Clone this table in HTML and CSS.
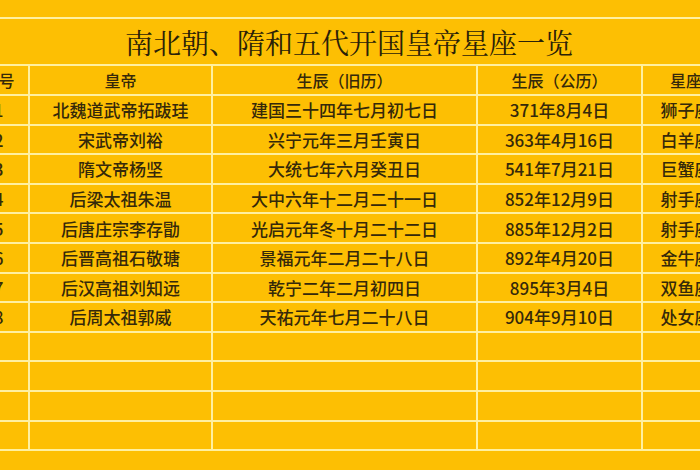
FILE: index.html
```html
<!DOCTYPE html>
<html lang="zh-CN">
<head>
<meta charset="utf-8">
<title>南北朝、隋和五代开国皇帝星座一览</title>
<link rel="stylesheet" href="styles.css">
</head>
<body>
<div class="page">
  <div class="sheet">
    <div class="title">南北朝、隋和五代开国皇帝星座一览</div>
    <div class="cell head">序号</div><div class="cell head">皇帝</div><div class="cell head">生辰（旧历）</div><div class="cell head">生辰（公历）</div><div class="cell head">星座</div>
    <div class="cell">1</div><div class="cell">北魏道武帝拓跋珪</div><div class="cell">建国三十四年七月初七日</div><div class="cell">371年8月4日</div><div class="cell">狮子座</div>
    <div class="cell">2</div><div class="cell">宋武帝刘裕</div><div class="cell">兴宁元年三月壬寅日</div><div class="cell">363年4月16日</div><div class="cell">白羊座</div>
    <div class="cell">3</div><div class="cell">隋文帝杨坚</div><div class="cell">大统七年六月癸丑日</div><div class="cell">541年7月21日</div><div class="cell">巨蟹座</div>
    <div class="cell">4</div><div class="cell">后梁太祖朱温</div><div class="cell">大中六年十二月二十一日</div><div class="cell">852年12月9日</div><div class="cell">射手座</div>
    <div class="cell">5</div><div class="cell">后唐庄宗李存勖</div><div class="cell">光启元年冬十月二十二日</div><div class="cell">885年12月2日</div><div class="cell">射手座</div>
    <div class="cell">6</div><div class="cell">后晋高祖石敬瑭</div><div class="cell">景福元年二月二十八日</div><div class="cell">892年4月20日</div><div class="cell">金牛座</div>
    <div class="cell">7</div><div class="cell">后汉高祖刘知远</div><div class="cell">乾宁二年二月初四日</div><div class="cell">895年3月4日</div><div class="cell">双鱼座</div>
    <div class="cell">8</div><div class="cell">后周太祖郭威</div><div class="cell">天祐元年七月二十八日</div><div class="cell">904年9月10日</div><div class="cell">处女座</div>
    <div class="cell"></div><div class="cell"></div><div class="cell"></div><div class="cell"></div><div class="cell"></div>
    <div class="cell"></div><div class="cell"></div><div class="cell"></div><div class="cell"></div><div class="cell"></div>
    <div class="cell"></div><div class="cell"></div><div class="cell"></div><div class="cell"></div><div class="cell"></div>
    <div class="cell"></div><div class="cell"></div><div class="cell"></div><div class="cell"></div><div class="cell"></div>
  </div>
</div>
</body>
</html>
```
FILE: styles.css
```css
html, body {
  margin: 0;
  padding: 0;
  background: #fdbf03;
  width: 700px;
  height: 470px;
  overflow: hidden;
}

.page {
  padding-top: 17px;
  width: 700px;
  overflow: hidden;
}

.sheet {
  display: grid;
  grid-template-columns: 59px 181px 263px 163px 86px;
  grid-template-rows: 45px 28px;
  grid-auto-rows: 27.6px;
  gap: 2px;
  padding: 2px 0;
  margin-left: -31px;
  width: 760px;
  background: #fff0a0;
  font-family: "Noto Sans CJK SC", "Microsoft YaHei", sans-serif;
  color: #35290a;
}

.title {
  grid-column: 1 / -1;
  background: #fdbf03;
  display: flex;
  align-items: center;
  justify-content: center;
  font-family: "Noto Serif CJK SC", "Noto Sans CJK SC", serif;
  font-size: 28px;
  color: #2a2108;
  padding-top: 1px;
}

.cell {
  background: #fdbf03;
  display: flex;
  align-items: center;
  justify-content: center;
  font-size: 17px;
  font-weight: 500;
  line-height: 1;
  white-space: nowrap;
  overflow: hidden;
}

.head {
  font-size: 16px;
}
```
